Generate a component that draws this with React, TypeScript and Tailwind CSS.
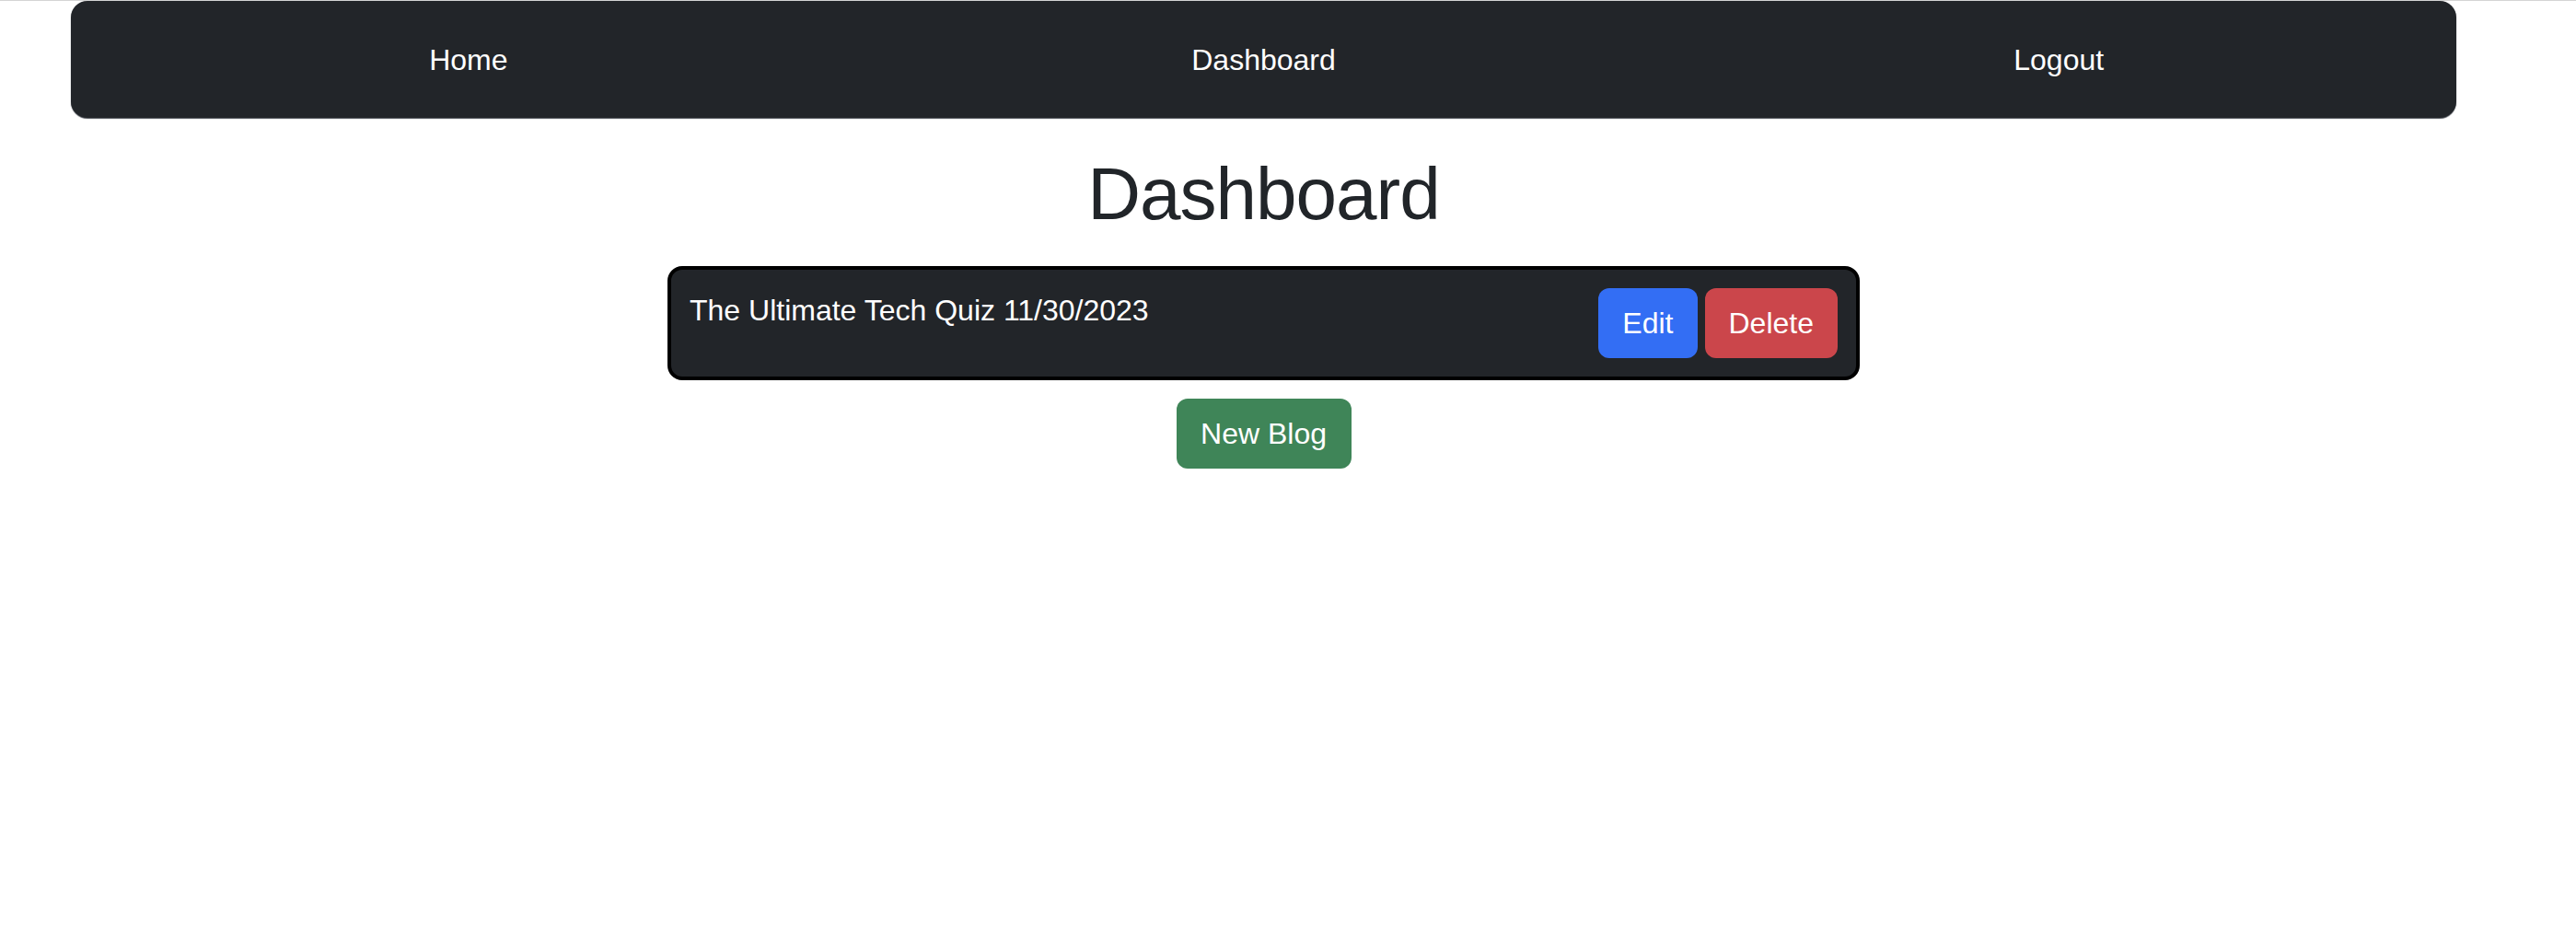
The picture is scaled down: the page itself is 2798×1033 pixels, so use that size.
import React from "react"

const links = ["Home", "Dashboard", "Logout"]

export default function App() {
  return (
    <div className="min-h-[1033px] bg-white border-t border-[#d4d4d4] text-[#212529] font-['Liberation_Sans',Arial,sans-serif]">
      <div className="pl-[77px] pr-[130px]">
        {/* Navbar */}
        <nav className="flex h-[127px] items-center rounded-[18px] bg-[#222529] shadow-[0_1px_1px_#4a4e55]">
          {links.map((label) => (
            <a
              key={label}
              href="#"
              className="flex-1 text-center text-[32px] leading-[48px] text-white"
            >
              {label}
            </a>
          ))}
        </nav>

        <h1 className="mt-[35px] mb-[30px] text-center text-[80px] leading-[96px] tracking-[-1px]">
          Dashboard
        </h1>

        {/* Blog post card */}
        <div className="mx-auto flex w-[1295px] items-start justify-between rounded-[16px] border-4 border-black bg-[#222529] p-[20px] text-white">
          <p className="text-[32px] leading-[48px]">The Ultimate Tech Quiz 11/30/2023</p>
          <div className="flex gap-[8px]">
            <button className="h-[76px] rounded-[12px] bg-[#336ef4] px-[26px] text-[32px] leading-[48px] text-white">
              Edit
            </button>
            <button className="h-[76px] rounded-[12px] bg-[#cb464b] px-[26px] text-[32px] leading-[48px] text-white">
              Delete
            </button>
          </div>
        </div>

        <div className="mt-[20px] flex justify-center">
          <button className="h-[76px] w-[190px] rounded-[12px] bg-[#3f8558] text-[32px] leading-[48px] text-white">
            New Blog
          </button>
        </div>
      </div>
    </div>
  )
}
